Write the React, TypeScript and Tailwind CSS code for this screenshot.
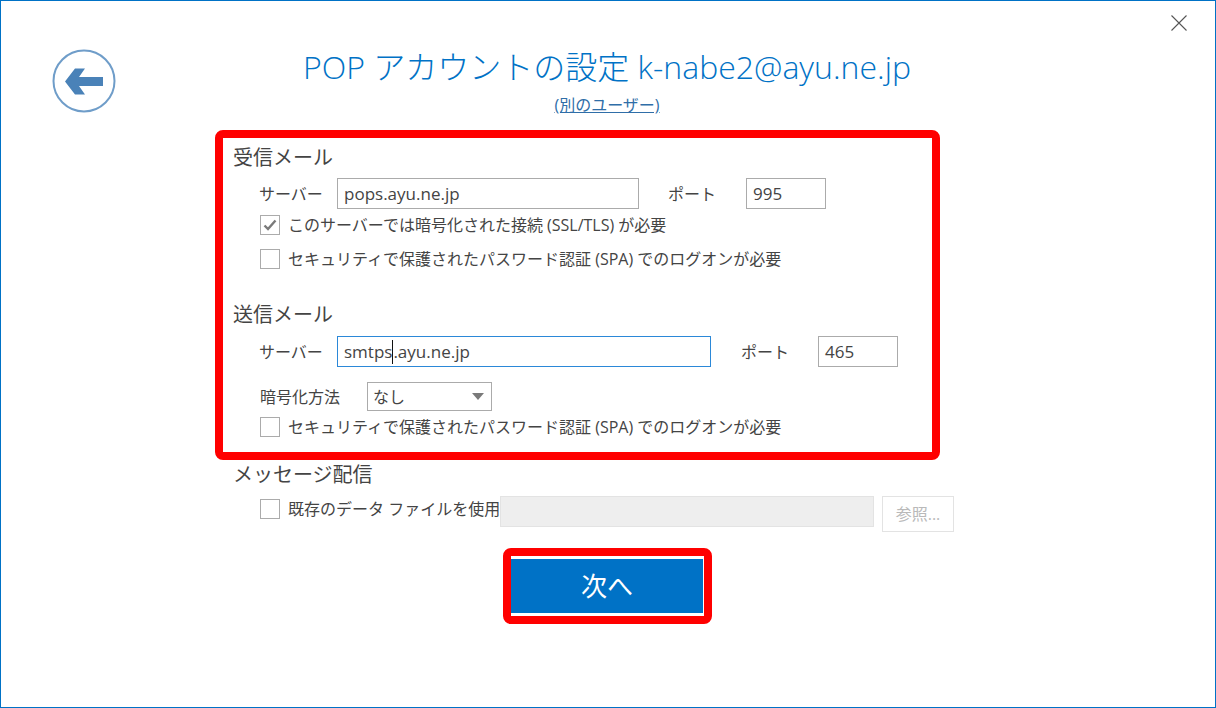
const sans = "font-['Open_Sans','Noto_Sans_CJK_JP',sans-serif]";

function Check({ checked = false }: { checked?: boolean }) {
  return (
    <span className="flex h-[20px] w-[20px] shrink-0 items-center justify-center border border-[#ababab] bg-white">
      {checked && (
        <svg width="16" height="14" viewBox="0 0 16 14">
          <path d="M2.5 7.5 L6 11 L13.5 2.5" fill="none" stroke="#7a7a7a" strokeWidth="2.4" />
        </svg>
      )}
    </span>
  );
}

function CheckRow({ label, checked, className }: { label: string; checked?: boolean; className: string }) {
  return (
    <div className={`ml-[37px] flex h-[20px] items-center gap-[8px] text-[16px] text-[#444444] ${className}`}>
      <Check checked={checked} />
      <span className="whitespace-pre">{label}</span>
    </div>
  );
}

function Field({ value, w, active, caret }: { value: string; w: string; active?: boolean; caret?: boolean }) {
  return (
    <div className={`flex h-[31px] items-center border px-[6px] text-[17px] text-[#444444] ${w} ${active ? "border-[#2b88d8]" : "border-[#ababab]"}`}>
      {caret ? (
        <>
          <span>smtps</span>
          <span className="h-[24px] w-px bg-[#111111]" />
          <span>.ayu.ne.jp</span>
        </>
      ) : (
        value
      )}
    </div>
  );
}

export default function App() {
  return (
    <div className={`h-[708px] w-[1216px] overflow-hidden border border-[#0072c6] bg-white ${sans}`}>
      <header className="flex h-[129px] items-start">
        <button className="ml-[51px] mt-[48px] h-[64px] w-[64px] shrink-0">
          <svg width="64" height="64" viewBox="0 0 64 64">
            <circle cx="32" cy="32" r="30.5" fill="white" stroke="#6f9dc9" strokeWidth="2" />
            <path d="M13 32.5 L23 19.5 H33 L27 28 H51 V37 H27 L33 45.5 H23 Z" fill="#4a82b8" />
          </svg>
        </button>
        <div className="w-[982px] shrink-0 text-center">
          <h1 className="mt-[44px] h-[44px] text-[32px] font-light leading-[44px] whitespace-pre text-[#0072c6]">POP アカウントの設定 k-nabe2@ayu.ne.jp</h1>
          <a className="mt-[5px] block text-[16px] leading-[22px] text-[#2f6ea8] underline">(別のユーザー)</a>
        </div>
        <button className="ml-[73px] mt-[14px] shrink-0">
          <svg width="16" height="16" viewBox="0 0 16 16">
            <path d="M0.5 0.5 L15.5 15.5 M15.5 0.5 L0.5 15.5" stroke="#555555" strokeWidth="1.1" fill="none" />
          </svg>
        </button>
      </header>

      <section className="ml-[214px] h-[330px] w-[725px] rounded-[8px] border-[8px] border-[#ff0000] text-[#444444]">
        <h2 className="ml-[10px] flex h-[40px] items-center text-[20px] font-normal">受信メール</h2>
        <div className="flex h-[31px] items-center">
          <span className="ml-[36px] w-[78px] text-[16px]">サーバー</span>
          <Field value="pops.ayu.ne.jp" w="w-[302px]" />
          <span className="ml-[29px] w-[78px] text-[16px]">ポート</span>
          <Field value="995" w="w-[80px]" />
        </div>
        <CheckRow className="mt-[6px]" checked label="このサーバーでは暗号化された接続 (SSL/TLS) が必要" />
        <CheckRow className="mt-[14px]" label="セキュリティで保護されたパスワード認証 (SPA) でのログオンが必要" />

        <h2 className="ml-[10px] mt-[26px] flex h-[40px] items-center text-[20px] font-normal">送信メール</h2>
        <div className="mt-[1px] flex h-[31px] items-center">
          <span className="ml-[36px] w-[78px] text-[16px]">サーバー</span>
          <Field value="" w="w-[374px]" active caret />
          <span className="ml-[30px] w-[77px] text-[16px]">ポート</span>
          <Field value="465" w="w-[80px]" />
        </div>
        <div className="mt-[15px] flex h-[29px] items-center">
          <span className="ml-[37px] w-[107px] text-[16px]">暗号化方法</span>
          <div className="flex h-[29px] w-[125px] items-center justify-between border border-[#ababab] pl-[5px] pr-[7px] text-[16px]">
            <span>なし</span>
            <svg width="12" height="7" viewBox="0 0 12 7">
              <path d="M0 0 H12 L6 7 Z" fill="#7a7a7a" />
            </svg>
          </div>
        </div>
        <CheckRow className="mt-[6px]" label="セキュリティで保護されたパスワード認証 (SPA) でのログオンが必要" />
      </section>

      <section className="ml-[232px] text-[#444444]">
        <h2 className="flex h-[30px] items-center text-[20px] font-normal">メッセージ配信</h2>
        <div className="mt-[6px] flex h-[36px] items-start">
          <div className="ml-[27px] mt-[1px] flex items-center gap-[8px] text-[16px]">
            <Check />
            <span className="w-[212px] whitespace-pre">既存のデータ ファイルを使用</span>
          </div>
          <div className="h-[31px] w-[374px] border border-[#e3e3e3] bg-[#eeeeee]" />
          <div className="ml-[8px] flex h-[36px] w-[72px] items-center justify-center border border-[#e3e3e3] text-[16px] text-[#b9b9b9]">参照...</div>
        </div>
      </section>

      <div className="ml-[502px] mt-[16px] h-[76px] w-[209px] rounded-[8px] border-[8px] border-[#ff0000]">
        <button className="h-[60px] w-[193px] border-y-[3px] border-r border-white bg-[#0072c6] text-[26px] text-white">次へ</button>
      </div>
    </div>
  );
}
